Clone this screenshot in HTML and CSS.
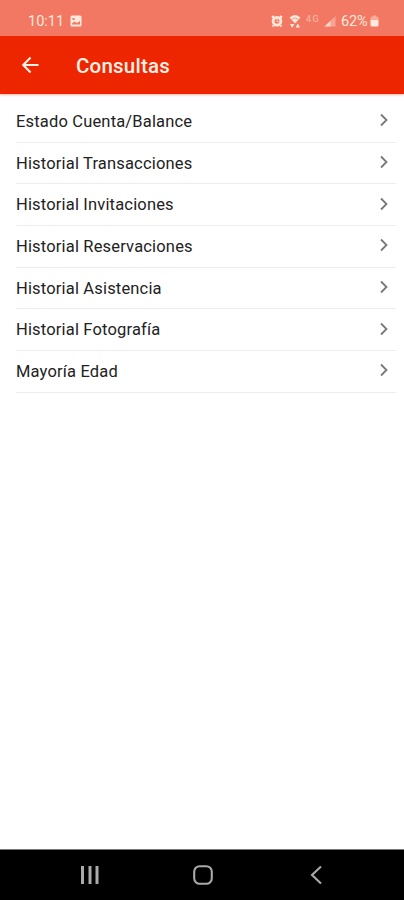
FILE: index.html
```
<!DOCTYPE html>
<html lang="es">

<head>
    <meta charset="UTF-8" />
    <meta name="viewport" content="width=device-width, initial-scale=1.0" />
    <title>Consultas</title>
    <link rel="stylesheet" href="styles.css">
</head>
<body>
    <div class="status-bar">
        <div class="status-left">
            <span class="time">10:11</span>
            <svg width="12" height="12" viewBox="0 0 12 12">
                <path fill="currentColor" fill-rule="evenodd" d="M2 0.5h8a1.5 1.5 0 0 1 1.5 1.5v8a1.5 1.5 0 0 1-1.5 1.5h-8a1.5 1.5 0 0 1-1.5-1.5v-8a1.5 1.5 0 0 1 1.5-1.5zM2 9.5h8v-3.5l-3 2-2.5-1.5-2.5 2zM2.5 3v2h2v-2z" />
            </svg>
        </div>
        <div class="status-right">
            <svg class="alarm" width="12" height="12" viewBox="0 0 12 12">
                <circle cx="6" cy="6.3" r="3.9" fill="none" stroke="currentColor" stroke-width="2.8" />
                <path d="M1 2.6L3 1M11 2.6L9 1M2.5 10.5L1.5 11.5M9.5 10.5l1 1" stroke="currentColor" stroke-width="2.2" />
                <path d="M6 4v2.6h2" fill="none" stroke="currentColor" stroke-width="0.8" />
            </svg>
            <svg class="wifi" width="12" height="14" viewBox="0 0 12 14">
                <path d="M0.5 3.5Q6-1.5 11.5 3.5L6 9.5z" fill="currentColor" />
                <path d="M2.8 5.2Q6 2.7 9.2 5.2" fill="none" stroke="#f27863" stroke-width="0.7" />
                <path d="M1 10h4.4l-2.2 3.8zM6.6 13.4H11L8.8 9.6z" fill="currentColor" />
            </svg>
            <span class="network">4G</span>
            <svg class="signal" width="12" height="12" viewBox="0 0 12 12">
                <path d="M0.5 11.5L11.5 1v10.5z" fill="currentColor" opacity="0.4" />
                <path d="M0.5 11.5L6.5 5.8v5.7z" fill="currentColor" opacity="0.7" />
            </svg>
            <span class="percent">62%</span>
            <svg class="battery" width="9" height="12" viewBox="0 0 9 12">
                <path d="M0.5 5V3a1.5 1.5 0 0 1 1.5-1.5h1V0.5h3v1h1A1.5 1.5 0 0 1 8.5 3v2z" fill="currentColor" opacity="0.45" />
                <path d="M0.5 5h8v5a1.5 1.5 0 0 1-1.5 1.5h-5A1.5 1.5 0 0 1 0.5 10z" fill="currentColor" />
            </svg>
        </div>
    </div>

    <header>
        <svg width="18" height="18" viewBox="0 0 18 18">
            <path d="M17.5 9H2.2M9.6 1.6L2.2 9l7.4 7.4" fill="none" stroke="currentColor" stroke-width="2.1" />
        </svg>
        <h1>Consultas</h1>
    </header>

    <ul class="menu">
        <li>Estado Cuenta/Balance <svg class="chevron" viewBox="0 0 8 14"><path d="M1 1.5L6.5 7L1 12.5" /></svg></li>
        <li>Historial Transacciones <svg class="chevron" viewBox="0 0 8 14"><path d="M1 1.5L6.5 7L1 12.5" /></svg></li>
        <li>Historial Invitaciones <svg class="chevron" viewBox="0 0 8 14"><path d="M1 1.5L6.5 7L1 12.5" /></svg></li>
        <li>Historial Reservaciones <svg class="chevron" viewBox="0 0 8 14"><path d="M1 1.5L6.5 7L1 12.5" /></svg></li>
        <li>Historial Asistencia <svg class="chevron" viewBox="0 0 8 14"><path d="M1 1.5L6.5 7L1 12.5" /></svg></li>
        <li>Historial Fotografía <svg class="chevron" viewBox="0 0 8 14"><path d="M1 1.5L6.5 7L1 12.5" /></svg></li>
        <li>Mayoría Edad <svg class="chevron" viewBox="0 0 8 14"><path d="M1 1.5L6.5 7L1 12.5" /></svg></li>
    </ul>

    <nav>
        <svg width="20" height="20" viewBox="0 0 20 20">
            <path d="M2.5 1v18M10 1v18M17 1v18" stroke="currentColor" stroke-width="3" />
        </svg>
        <svg width="20" height="20" viewBox="0 0 20 20">
            <rect x="1.2" y="1.2" width="17.6" height="17.6" rx="5.5" fill="none" stroke="currentColor" stroke-width="2.1" />
        </svg>
        <svg width="20" height="20" viewBox="0 0 20 20">
            <path d="M15 1.5L6 10l9 8.5" fill="none" stroke="currentColor" stroke-width="2.1" />
        </svg>
    </nav>
</body>
</html>
```
FILE: styles.css
```
:root {
    --primary: #ed2600;
    --status: #f27863;
    --text: #222;
    --line: #ededed;
}
* {
    box-sizing: border-box;
}
body {
    font-family: Roboto, sans-serif;
    margin: 0;
    height: 900px;
    display: flex;
    flex-direction: column;
    background: #fff;
    color: var(--text);
}
svg {
    display: block;
    flex: none;
}
.status-bar {
    height: 36px;
    padding: 6px 25px 0 28px;
    display: flex;
    justify-content: space-between;
    align-items: center;
    background: var(--status);
    color: #ffe9dc;
    font-size: 14.5px;
}
.status-left, .status-right {
    display: flex;
    align-items: center;
}
.status-left {
    gap: 6px;
}
.time {
    width: 36px;
}
.wifi {
    margin-left: 6px;
}
.network {
    width: 16px;
    margin: -5px 2px 0 5px;
    font-size: 9px;
    letter-spacing: 1.5px;
    opacity: 0.6;
}
.percent {
    width: 28px;
    margin-left: 5px;
    letter-spacing: -0.2px;
}
.battery {
    margin-left: 1px;
}
header {
    height: 58px;
    padding: 0 21px;
    display: flex;
    align-items: center;
    gap: 37px;
    background: var(--primary);
    color: #fff0e8;
    box-shadow: 0 1px 2px rgba(237, 38, 0, 0.35);
}
h1 {
    margin: 1px 0 0;
    font-size: 20.5px;
    font-weight: 500;
    letter-spacing: 0.22px;
}
.menu {
    flex: 1;
    margin: 0;
    padding: 7px 8px 0 16px;
    list-style: none;
}
.menu li {
    height: 41.7px;
    padding-right: 8px;
    display: flex;
    justify-content: space-between;
    align-items: center;
    border-bottom: 1px solid var(--line);
    font-size: 16.5px;
    letter-spacing: 0.17px;
}
.chevron {
    width: 8px;
    height: 14px;
    margin-top: -2px;
    fill: none;
    stroke: #777;
    stroke-width: 1.8;
}
nav {
    height: 51px;
    padding: 0 78px 0 80px;
    display: flex;
    justify-content: space-between;
    align-items: center;
    border-top: 1px solid #777;
    background: #000;
    color: #aaa;
}
```
